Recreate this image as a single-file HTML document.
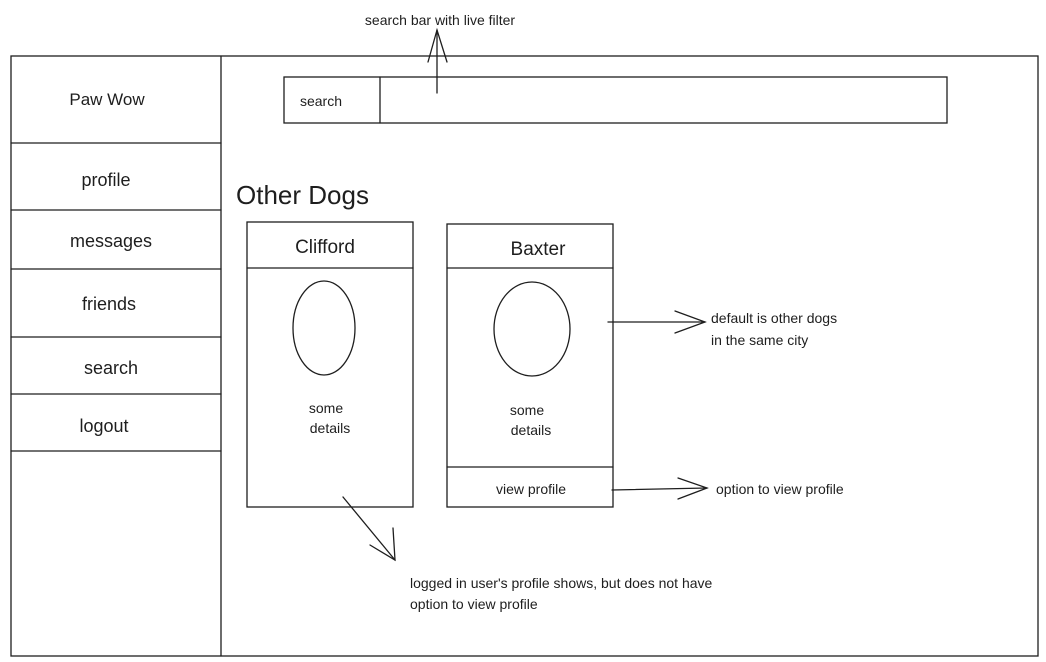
<!DOCTYPE html>
<html><head><meta charset="utf-8"><style>
html,body{margin:0;padding:0;background:#fff;}
svg{display:block}
text{font-family:"Liberation Sans",sans-serif;fill:#1e1e1e}
</style></head><body>
<svg width="1046" height="662" viewBox="0 0 1046 662" xmlns="http://www.w3.org/2000/svg">
<g fill="none" stroke="#1e1e1e" stroke-width="1.3" stroke-linecap="round">
<rect x="11" y="56" width="1027" height="600"/>
<line x1="221" y1="56" x2="221" y2="656"/>
<line x1="11" y1="143" x2="221" y2="143"/>
<line x1="11" y1="210" x2="221" y2="210"/>
<line x1="11" y1="269" x2="221" y2="269"/>
<line x1="11" y1="337" x2="221" y2="337"/>
<line x1="11" y1="394" x2="221" y2="394"/>
<line x1="11" y1="451" x2="221" y2="451"/>
<rect x="284" y="77" width="663" height="46"/>
<line x1="380" y1="77" x2="380" y2="123"/>
<line x1="437" y1="93" x2="437" y2="30"/>
<polyline points="428,62 437,30 447,62"/>
<rect x="247" y="222" width="166" height="285"/>
<line x1="247" y1="268" x2="413" y2="268"/>
<ellipse cx="324" cy="328" rx="31" ry="47"/>
<rect x="447" y="224" width="166" height="283"/>
<line x1="447" y1="268" x2="613" y2="268"/>
<line x1="447" y1="467" x2="613" y2="467"/>
<ellipse cx="532" cy="329" rx="38" ry="47"/>
<line x1="608" y1="322" x2="705" y2="322"/>
<polyline points="675,311 705,322 675,333"/>
<line x1="612" y1="490" x2="707" y2="488"/>
<polyline points="678,478 707,488 678,499"/>
<line x1="343" y1="497" x2="395" y2="560"/>
<polyline points="370,545 395,560 393,528"/>
</g>
<text x="107" y="105" font-size="17" text-anchor="middle">Paw Wow</text>
<text x="106" y="186" font-size="18" text-anchor="middle">profile</text>
<text x="111" y="247" font-size="18" text-anchor="middle">messages</text>
<text x="109" y="310" font-size="18" text-anchor="middle">friends</text>
<text x="111" y="374" font-size="18" text-anchor="middle">search</text>
<text x="104" y="432" font-size="18" text-anchor="middle">logout</text>
<text x="321" y="106" font-size="14" text-anchor="middle">search</text>
<text x="440" y="25" font-size="14" text-anchor="middle">search bar with live filter</text>
<text x="236" y="204" font-size="26">Other Dogs</text>
<text x="325" y="253" font-size="19" text-anchor="middle">Clifford</text>
<text x="538" y="255" font-size="19" text-anchor="middle">Baxter</text>
<text x="326" y="413" font-size="14" text-anchor="middle">some</text>
<text x="330" y="433" font-size="14" text-anchor="middle">details</text>
<text x="527" y="415" font-size="14" text-anchor="middle">some</text>
<text x="531" y="435" font-size="14" text-anchor="middle">details</text>
<text x="531" y="494" font-size="14" text-anchor="middle">view profile</text>
<text x="711" y="323" font-size="14">default is other dogs</text>
<text x="711" y="345" font-size="14">in the same city</text>
<text x="716" y="494" font-size="14">option to view profile</text>
<text x="410" y="588" font-size="14">logged in user's profile shows, but does not have</text>
<text x="410" y="609" font-size="14">option to view profile</text>
</svg>
</body></html>
